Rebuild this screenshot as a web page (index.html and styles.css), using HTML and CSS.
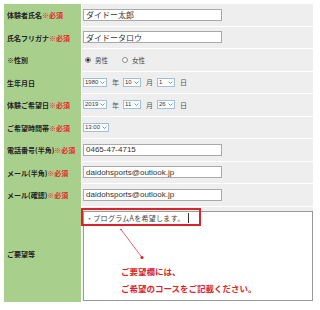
FILE: index.html
```html
<!DOCTYPE html>
<html>

<head>
    <meta charset="UTF-8">
    <title>体験申込フォーム</title>
    <link rel="stylesheet" href="styles.css">
</head>

<body>
    <div class="form">
        <div class="label">体験者氏名<span class="req">※必須</span></div>
        <div class="field"><input class="text" type="text" value="ダイドー太郎"></div>

        <div class="label">氏名フリガナ<span class="req">※必須</span></div>
        <div class="field"><input class="text" type="text" value="ダイドータロウ"></div>

        <div class="label">※性別</div>
        <div class="field">
            <input class="radio" type="radio" name="sex" checked><span class="opt">男性</span>
            <input class="radio" type="radio" name="sex"><span class="opt">女性</span>
        </div>

        <div class="label">生年月日</div>
        <div class="field">
            <span class="select year"><select><option>1980</option></select><i class="arrow"><svg width="7" height="7"><polyline points="1.5,2.5 3.5,4.5 5.5,2.5" /></svg></i></span>
            <span class="unit">年</span>
            <span class="select short"><select><option>10</option></select><i class="arrow"><svg width="7" height="7"><polyline points="1.5,2.5 3.5,4.5 5.5,2.5" /></svg></i></span>
            <span class="unit">月</span>
            <span class="select short"><select><option>1</option></select><i class="arrow"><svg width="7" height="7"><polyline points="1.5,2.5 3.5,4.5 5.5,2.5" /></svg></i></span>
            <span class="unit">日</span>
        </div>

        <div class="label">体験ご希望日<span class="req">※必須</span></div>
        <div class="field">
            <span class="select year"><select><option>2019</option></select><i class="arrow"><svg width="7" height="7"><polyline points="1.5,2.5 3.5,4.5 5.5,2.5" /></svg></i></span>
            <span class="unit">年</span>
            <span class="select short"><select><option>11</option></select><i class="arrow"><svg width="7" height="7"><polyline points="1.5,2.5 3.5,4.5 5.5,2.5" /></svg></i></span>
            <span class="unit">月</span>
            <span class="select short"><select><option>26</option></select><i class="arrow"><svg width="7" height="7"><polyline points="1.5,2.5 3.5,4.5 5.5,2.5" /></svg></i></span>
            <span class="unit">日</span>
        </div>

        <div class="label">ご希望時間帯<span class="req">※必須</span></div>
        <div class="field">
            <span class="select time"><select><option>13:00</option></select><i class="arrow"><svg width="7" height="7"><polyline points="1.5,2.5 3.5,4.5 5.5,2.5" /></svg></i></span>
        </div>

        <div class="label">電話番号(半角)<span class="req">※必須</span></div>
        <div class="field"><input class="text" type="text" value="0465-47-4715"></div>

        <div class="label">メール(半角)<span class="req">※必須</span></div>
        <div class="field"><input class="text" type="text" value="daidohsports@outlook.jp"></div>

        <div class="label">メール(確認)<span class="req">※必須</span></div>
        <div class="field"><input class="text" type="text" value="daidohsports@outlook.jp"></div>

        <div class="label">ご要望等</div>
        <div class="field request">
            <textarea class="memo">・プログラムAを希望します。</textarea>
            <!-- 注釈（赤枠・引き出し線・説明文） -->
            <div class="mark"><span class="caret"></span></div>
            <svg class="pointer" width="231" height="95">
                <line x1="39" y1="22.5" x2="60" y2="50.5" />
                <circle cx="39" cy="22.5" r="0.8" />
                <circle cx="60" cy="50.5" r="1.6" />
            </svg>
            <p class="note">ご要望欄には、<br>ご希望のコースをご記載ください。</p>
        </div>
    </div>
</body>

</html>
```

FILE: styles.css
```css
/* 申込フォーム */
body {
    margin: 0;
    background: #fff;
    font-family: "Noto Sans CJK JP", sans-serif;
}

.form {
    display: grid;
    grid-template-columns: 77px 232px;
    grid-template-rows: repeat(9, 22.5px) 95.5px;
    margin: 4px 0 0 4px;
}

.label {
    display: flex;
    align-items: center;
    padding-left: 3px;
    background: #a9cf8d;
    color: #222;
    font-size: 7px;
    font-weight: bold;
    white-space: nowrap;
}

.req {
    color: #e8262b;
}

.field {
    display: flex;
    align-items: center;
    padding-left: 1px;
    background: #eeeeee;
    border-left: 1px solid #fff;
    border-bottom: 1px solid #fff;
    color: #555;
    font-size: 7px;
}

.text {
    width: 139px;
    height: 12px;
    box-sizing: border-box;
    margin: 0;
    padding: 0 2px;
    border: 1px solid #a9a9a9;
    background: #fff;
    color: #333;
    font: 8px "Liberation Sans", "Noto Sans CJK JP", sans-serif;
}

/* ラジオボタン */
.radio {
    appearance: none;
    width: 6px;
    height: 6px;
    margin: 0 4px 0 2px;
    border: 1px solid #8a8a8a;
    border-radius: 50%;
    background: #fff;
}

.radio:checked {
    background: radial-gradient(circle, #222 0 1.3px, #fff 1.8px);
}

.opt {
    margin-right: 12px;
    font-size: 6.5px;
    color: #444;
}

/* セレクト */
.select {
    display: inline-flex;
    align-items: center;
    height: 9px;
    box-sizing: border-box;
    border: 1px solid #9cc2e0;
    background: #fff;
}

.select select {
    appearance: none;
    height: 7px;
    margin: 0;
    padding: 0 0 0 1px;
    border: 0;
    outline: none;
    background: transparent;
    color: #333;
    font: 6px/7px "Liberation Sans", sans-serif;
}

.year select {
    width: 15px;
}

.short select {
    width: 9px;
}

.time select {
    width: 17px;
}

.arrow {
    display: flex;
    width: 7px;
    height: 7px;
}

.arrow polyline {
    fill: none;
    stroke: #777;
    stroke-width: 0.8;
}

.unit {
    margin: 0 4px 0 5px;
    font-size: 7px;
}

/* ご要望欄 */
.request {
    position: relative;
}

.memo {
    align-self: flex-end;
    width: 231px;
    height: 90px;
    box-sizing: border-box;
    margin: 0;
    padding: 1px 2px;
    border: 1px solid #9a9a9a;
    resize: none;
    color: #444;
    font: 7px/10px "Noto Sans CJK JP", sans-serif;
    letter-spacing: 0.3px;
}

.mark {
    position: absolute;
    left: -1px;
    top: 1.5px;
    width: 120px;
    height: 18px;
    box-sizing: border-box;
    border: 2px solid #d9252a;
}

.caret {
    position: absolute;
    left: 105px;
    top: 3px;
    width: 1px;
    height: 10px;
    background: #333;
}

.pointer {
    position: absolute;
    left: 0;
    top: 0;
}

.pointer line {
    stroke: #d9252a;
    stroke-width: 0.7;
}

.pointer circle {
    fill: #d9252a;
}

.note {
    position: absolute;
    left: 39px;
    top: 56px;
    margin: 0;
    color: #d9252a;
    font-size: 8.5px;
    font-weight: bold;
    line-height: 17px;
    white-space: nowrap;
}
```
